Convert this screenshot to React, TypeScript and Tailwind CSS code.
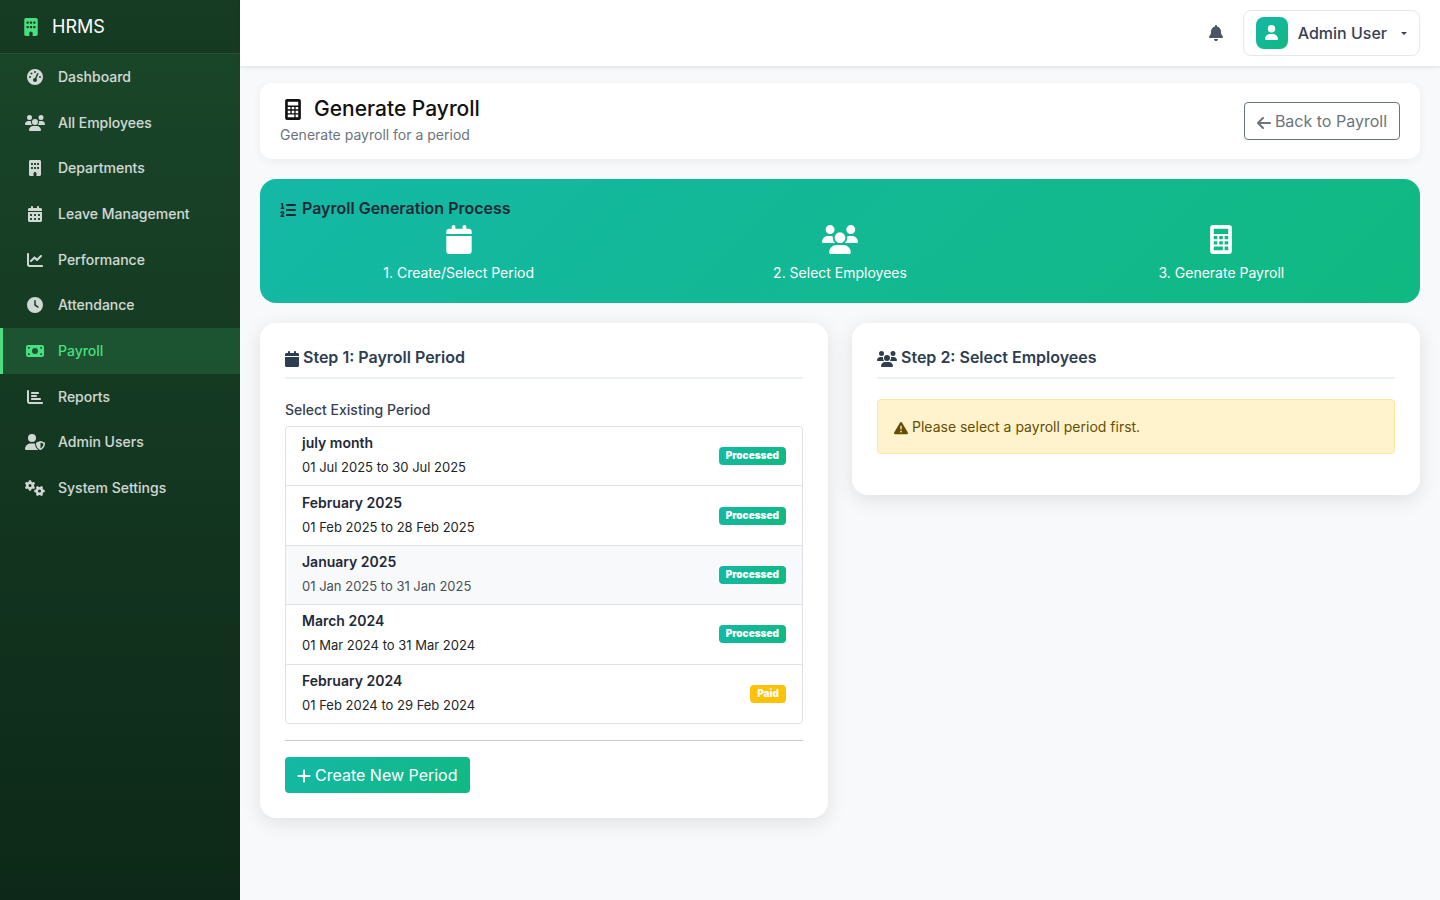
import { useState } from 'react';
import type { ComponentType } from 'react';
import {
  FaArrowLeft,
  FaBell,
  FaBuilding,
  FaCalendar,
  FaCalendarDays,
  FaChartBar,
  FaChartLine,
  FaClock,
  FaGaugeHigh,
  FaGears,
  FaListOl,
  FaMoneyBill,
  FaPlus,
  FaTriangleExclamation,
  FaUser,
  FaUserShield,
  FaUsers,
} from 'react-icons/fa6';

type Icon = ComponentType<{ className?: string }>;

interface IconItem {
  label: string;
  icon: Icon;
  size: string;
}

interface Period {
  id: number;
  name: string;
  range: string;
  status: 'Processed' | 'Paid';
}

// Calculator with square keys
function CalculatorIcon({ className }: { className?: string }) {
  return (
    <svg viewBox="0 0 384 512" fill="currentColor" fillRule="evenodd" className={className} aria-hidden="true">
      <path d="M48 0h288c26 0 48 22 48 48v416c0 26-22 48-48 48H48c-26 0-48-22-48-48V48C0 22 22 0 48 0z M64 64v96h256V64z M64 192v60h64v-60z M160 192v60h64v-60z M256 192v60h64v-60z M64 286v60h64v-60z M160 286v60h64v-60z M256 286v60h64v-60z M64 380v64h160v-64z M256 380v64h64v-64z" />
    </svg>
  );
}

const navItems: IconItem[] = [
  { label: 'Dashboard', icon: FaGaugeHigh, size: 'h-4 w-4' },
  { label: 'All Employees', icon: FaUsers, size: 'h-4 w-5' },
  { label: 'Departments', icon: FaBuilding, size: 'h-4 w-3' },
  { label: 'Leave Management', icon: FaCalendarDays, size: 'h-4 w-3.5' },
  { label: 'Performance', icon: FaChartLine, size: 'h-4 w-4' },
  { label: 'Attendance', icon: FaClock, size: 'h-4 w-4' },
  { label: 'Payroll', icon: FaMoneyBill, size: 'h-4 w-[18px]' },
  { label: 'Reports', icon: FaChartBar, size: 'h-4 w-4' },
  { label: 'Admin Users', icon: FaUserShield, size: 'h-4 w-5' },
  { label: 'System Settings', icon: FaGears, size: 'h-4 w-5' },
];

const periods: Period[] = [
  { id: 1, name: 'july month', range: '01 Jul 2025 to 30 Jul 2025', status: 'Processed' },
  { id: 2, name: 'February 2025', range: '01 Feb 2025 to 28 Feb 2025', status: 'Processed' },
  { id: 3, name: 'January 2025', range: '01 Jan 2025 to 31 Jan 2025', status: 'Processed' },
  { id: 4, name: 'March 2024', range: '01 Mar 2024 to 31 Mar 2024', status: 'Processed' },
  { id: 5, name: 'February 2024', range: '01 Feb 2024 to 29 Feb 2024', status: 'Paid' },
];

const steps: IconItem[] = [
  { label: '1. Create/Select Period', icon: FaCalendar, size: 'h-[29px] w-[26px]' },
  { label: '2. Select Employees', icon: FaUsers, size: 'h-[29px] w-9' },
  { label: '3. Generate Payroll', icon: CalculatorIcon, size: 'h-[29px] w-[22px]' },
];

function Sidebar() {
  return (
    <aside className="flex w-60 shrink-0 flex-col bg-[linear-gradient(180deg,#1a472a,#0d2818)]">
      <div className="flex h-[54px] items-center gap-3.5 border-b border-white/10 bg-black/15 px-6 text-lg text-white">
        <FaBuilding className="h-[18px] w-3.5 text-[#4ade80]" />
        HRMS
      </div>
      <nav>
        <ul className="flex h-[457px] flex-col">
          {navItems.map(({ label, icon: Icon, size }) => {
            const active = label === 'Payroll';
            return (
              <li key={label} className="flex-1">
                <a
                  href="#"
                  className={`flex h-full items-center gap-3 border-l-[3px] pl-5 text-sm font-medium ${
                    active
                      ? 'border-[#4ade80] bg-[#4ade80]/15 text-[#4ade80]'
                      : 'border-transparent text-white/80 hover:bg-white/5'
                  }`}
                >
                  <span className="flex w-[23px] justify-center">
                    <Icon className={size} />
                  </span>
                  {label}
                </a>
              </li>
            );
          })}
        </ul>
      </nav>
    </aside>
  );
}

function TopBar() {
  return (
    <header className="flex h-[67px] items-center justify-end gap-5 border-b border-[#e5e7eb] bg-white px-5 shadow-[0_1px_3px_rgba(0,0,0,0.08)]">
      <button type="button" aria-label="Notifications" className="text-[#4b5563]">
        <FaBell className="h-4 w-3.5" />
      </button>
      <button
        type="button"
        className="flex items-center rounded-lg border border-[#e5e7eb] px-3 py-1.5 font-medium text-[#374151]"
      >
        <span className="flex size-8 items-center justify-center rounded-lg bg-[linear-gradient(135deg,#14b8a6,#10b981)] text-white">
          <FaUser className="mb-0.5 h-[15px] w-[13px]" />
        </span>
        <span className="ml-2.5">Admin User</span>
        <span className="ml-3.5 border-x-[3px] border-t-[3px] border-x-transparent border-t-[#374151]" />
      </button>
    </header>
  );
}

function CardTitle({ icon: Icon, size, children }: { icon: Icon; size: string; children: string }) {
  return (
    <h2 className="mb-5 flex items-center gap-1 border-b-2 border-[#ecf0f1] pb-2.5 leading-5 font-semibold text-[#2c3e50]">
      <Icon className={`mt-1 ${size}`} />
      {children}
    </h2>
  );
}

function PeriodRow({ period, highlighted, onSelect }: { period: Period; highlighted: boolean; onSelect: () => void }) {
  return (
    <li className="flex-1">
      <button
        type="button"
        onClick={onSelect}
        className={`flex h-full w-full items-center justify-between px-4 text-left ${highlighted ? 'bg-[#f8f9fa]' : ''}`}
      >
        <span className="pb-0.5">
          <span className="block text-sm leading-6 font-semibold text-[#1f2937]">{period.name}</span>
          <span className={`block text-[13px] leading-6 ${highlighted ? 'text-[#495057]' : 'text-[#212529]'}`}>
            {period.range}
          </span>
        </span>
        <span
          className={`rounded px-[7px] pb-0.5 text-[10px] leading-4 font-black text-white ${
            period.status === 'Paid' ? 'bg-[#ffc107]' : 'bg-[linear-gradient(135deg,#14b8a6,#10b981)]'
          }`}
        >
          {period.status}
        </span>
      </button>
    </li>
  );
}

export default function App() {
  const [selected, setSelected] = useState(3);

  return (
    <div className="flex min-h-screen bg-[#f8f9fb] font-['Inter',sans-serif] text-[#212529]">
      <Sidebar />

      <div className="min-w-0 flex-1">
        <TopBar />

        <main className="px-5 py-4">
          {/* Page header */}
          <div className="mb-5 flex items-center justify-between rounded-xl bg-white px-5 py-3 shadow-[0_2px_10px_rgba(0,0,0,0.06)]">
            <div>
              <h1 className="flex items-center gap-2 text-[21px] leading-7 font-medium text-[#111]">
                <span className="flex w-[26px] justify-center">
                  <CalculatorIcon className="h-[21px] w-4" />
                </span>
                Generate Payroll
              </h1>
              <p className="text-sm leading-6 text-[#6c757d]">Generate payroll for a period</p>
            </div>
            <a
              href="#"
              className="flex items-center gap-1 rounded border border-[#6c757d] px-3 py-1.5 leading-6 text-[#6c757d] hover:bg-[#6c757d] hover:text-white"
            >
              <FaArrowLeft className="mt-1 h-4 w-3.5" />
              Back to Payroll
            </a>
          </div>

          {/* Process overview */}
          <section className="mb-5 rounded-2xl bg-[linear-gradient(135deg,#14b8a6,#10b981)] px-5 py-[18px]">
            <h2 className="flex items-center gap-1.5 leading-[22px] font-semibold text-[#1f2937]">
              <FaListOl className="mt-1 size-4" />
              Payroll Generation Process
            </h2>
            <ol className="mt-1.5 grid grid-cols-3 gap-6 text-center text-sm text-white">
              {steps.map(({ label, icon: Icon, size }) => (
                <li key={label} className="flex flex-col items-center gap-[7px]">
                  <Icon className={size} />
                  <span className="leading-6">{label}</span>
                </li>
              ))}
            </ol>
          </section>

          <div className="grid grid-cols-1 items-start gap-6 lg:grid-cols-2">
            <section className="rounded-2xl bg-white px-[25px] pt-6 pb-[25px] shadow-[0_5px_20px_rgba(0,0,0,0.1)]">
              <CardTitle icon={FaCalendar} size="h-4 w-3.5">
                Step 1: Payroll Period
              </CardTitle>
              <h3 className="mb-1.5 text-sm leading-[21px] font-medium text-[#374151]">Select Existing Period</h3>
              <ul className="flex h-[298px] flex-col divide-y divide-[#dee2e6] overflow-hidden rounded border border-[#dee2e6]">
                {periods.map(period => (
                  <PeriodRow
                    key={period.id}
                    period={period}
                    highlighted={period.id === selected}
                    onSelect={() => setSelected(period.id)}
                  />
                ))}
              </ul>
              <hr className="my-4 border-[#c8cacc]" />
              <button
                type="button"
                className="flex items-center gap-1 rounded bg-[linear-gradient(135deg,#14b8a6,#10b981)] px-3 py-1.5 leading-6 text-white"
              >
                <FaPlus className="mt-0.5 h-4 w-3.5" />
                Create New Period
              </button>
            </section>

            <section className="rounded-2xl bg-white px-[25px] pt-6 pb-[25px] shadow-[0_5px_20px_rgba(0,0,0,0.1)]">
              <CardTitle icon={FaUsers} size="h-4 w-5">
                Step 2: Select Employees
              </CardTitle>
              <div
                role="alert"
                className="mb-4 flex items-center gap-1 rounded border border-[#ffe69c] bg-[#fff3cd] p-4 text-sm leading-[21px] text-[#664d03]"
              >
                <FaTriangleExclamation className="mt-0.5" />
                Please select a payroll period first.
              </div>
            </section>
          </div>
        </main>
      </div>
    </div>
  );
}
